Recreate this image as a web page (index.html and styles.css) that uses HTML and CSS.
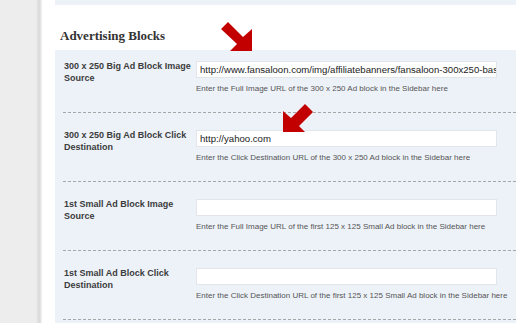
FILE: index.html
```html
<!DOCTYPE html>
<html>
<head>
<meta charset="utf-8">
<link rel="stylesheet" href="styles.css">
</head>
<body class="page">
  <div class="gutter"></div>
  <main class="panel">
    <div class="topbox"></div>
    <h2 class="heading">Advertising Blocks</h2>
    <section class="blocks">
      <div class="row">
        <div class="label">300 x 250 Big Ad Block Image Source</div>
        <div class="field">
          <div class="input">http://www.fansaloon.com/img/affiliatebanners/fansaloon-300x250-basketball.jpg</div>
          <div class="desc">Enter the Full Image URL of the 300 x 250 Ad block in the Sidebar here</div>
        </div>
      </div>
      <div class="row">
        <div class="label">300 x 250 Big Ad Block Click Destination</div>
        <div class="field">
          <div class="input">http://yahoo.com</div>
          <div class="desc">Enter the Click Destination URL of the 300 x 250 Ad block in the Sidebar here</div>
        </div>
      </div>
      <div class="row">
        <div class="label">1st Small Ad Block Image Source</div>
        <div class="field">
          <div class="input"></div>
          <div class="desc">Enter the Full Image URL of the first 125 x 125 Small Ad block in the Sidebar here</div>
        </div>
      </div>
      <div class="row">
        <div class="label">1st Small Ad Block Click Destination</div>
        <div class="field">
          <div class="input"></div>
          <div class="desc">Enter the Click Destination URL of the first 125 x 125 Small Ad block in the Sidebar here</div>
        </div>
      </div>
    </section>
  </main>
  <svg class="arrows" width="516" height="323" viewBox="0 0 516 323">
    <polygon fill="#c20000" points="228,22 243,37 252,29 252,51 230,51 237,44 221,29"/>
    <polygon fill="#c20000" points="305,104 313,112 299,126 305,132 283,132 283,111 291,118"/>
  </svg>
</body>
</html>
```

FILE: styles.css
```css
html, body {
  margin: 0;
  padding: 0;
}
.page {
  width: 516px;
  height: 323px;
  overflow: hidden;
  display: flex;
  background: #ffffff;
  position: relative;
  font-family: "Liberation Sans", Arial, sans-serif;
}
.gutter {
  width: 42px;
  flex: none;
  background: linear-gradient(to right, #ededed 0, #ededed 36px, #e0e0e0 38px, #d8d8d8 39px, #e8e8e8 41px, #f6f6f6 42px);
}
.panel {
  flex: 1;
  padding-left: 13px;
  display: flex;
  flex-direction: column;
}
.topbox {
  height: 5px;
  background: #edf2f8;
  flex: none;
}
.heading {
  margin: 0;
  padding: 23px 0 0 5px;
  height: 22px;
  font-family: "Liberation Serif", Georgia, serif;
  font-weight: bold;
  font-size: 13px;
  line-height: 16px;
  color: #333;
  flex: none;
}
.blocks {
  background: #edf2f9;
  flex: 1;
  padding-left: 8px;
}
.row {
  display: flex;
  padding: 17px 0 18px 1px;
  border-bottom: 1px dashed #a4a6a8;
}
.row:first-child {
  padding-top: 11px;
}
.label {
  width: 129px;
  margin-right: 3px;
  font-size: 9px;
  font-weight: bold;
  line-height: 12px;
  color: #3c3c3c;
  margin-top: -1px;
}
.field {
  width: 301px;
}
.input {
  height: 17px;
  box-sizing: border-box;
  background: #fff;
  border: 1px solid #e2e6ea;
  font-size: 9.6px;
  line-height: 15px;
  padding: 0 3px;
  color: #222;
  white-space: nowrap;
  overflow: hidden;
}
.desc {
  margin-top: 5px;
  font-size: 8px;
  line-height: 11px;
  color: #555;
  white-space: nowrap;
}
.arrows {
  position: absolute;
  left: 0;
  top: 0;
}
```
